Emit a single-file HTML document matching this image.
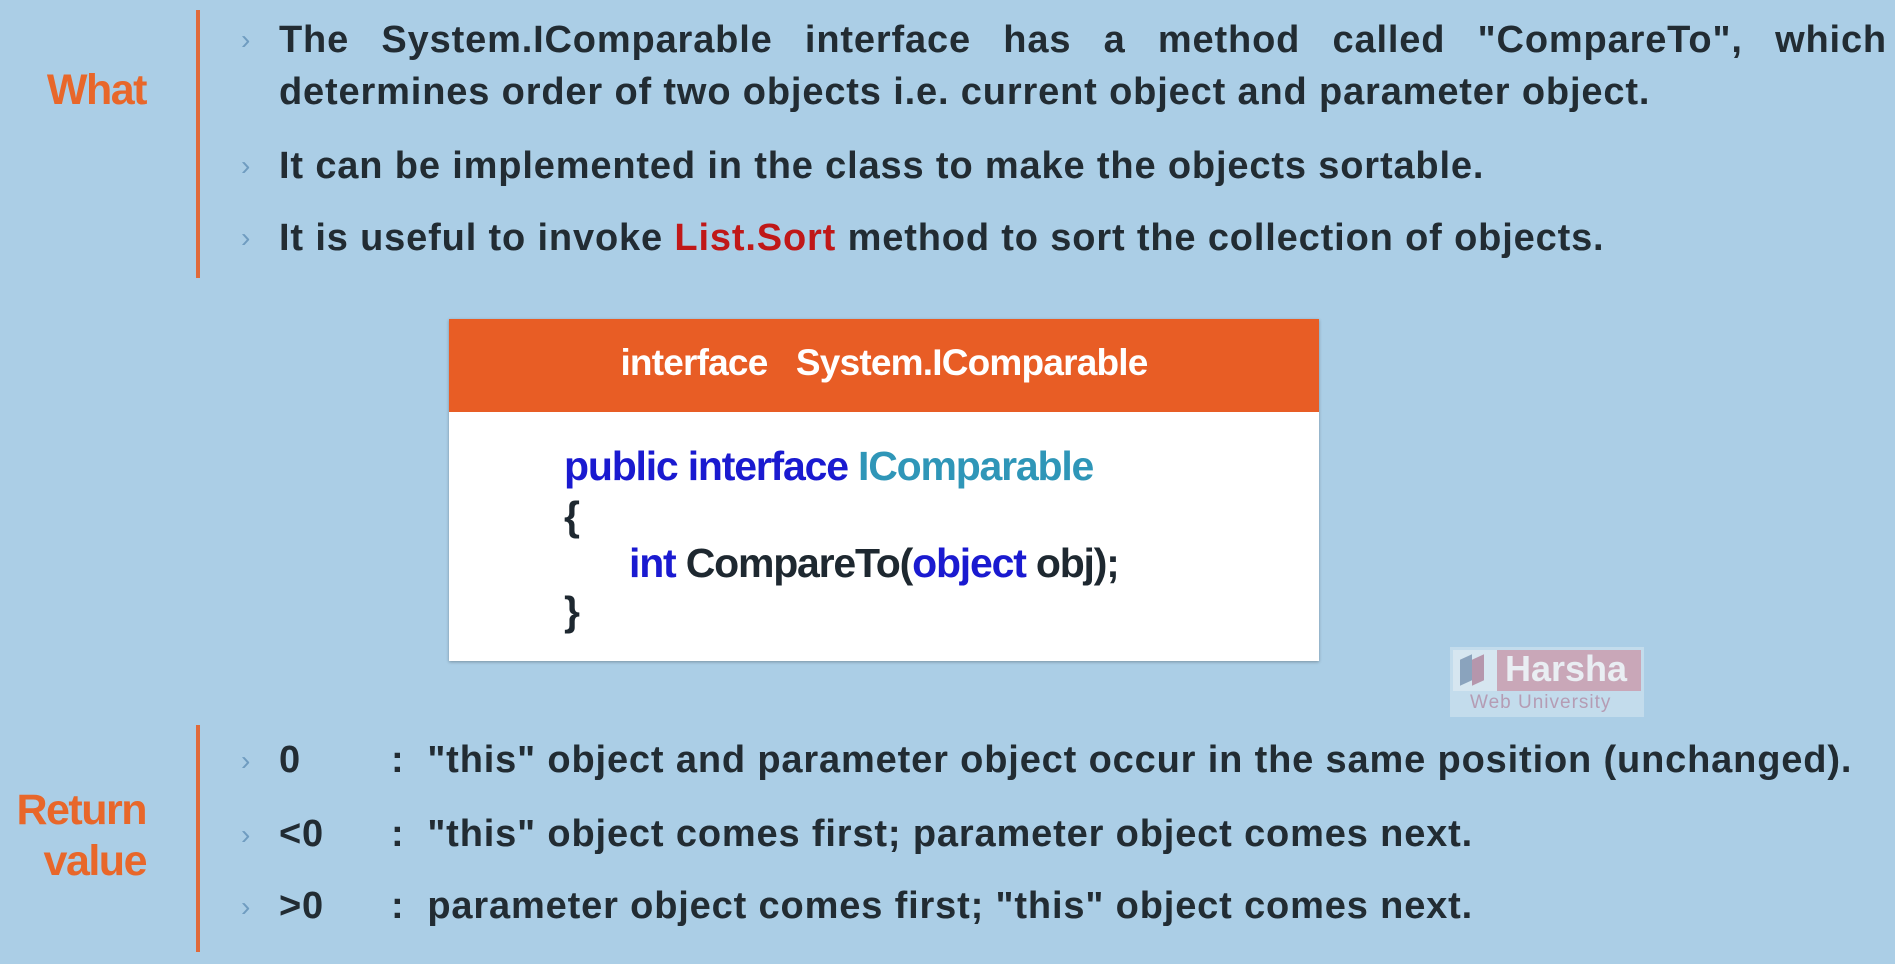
<!DOCTYPE html>
<html><head><meta charset="utf-8"><style>
html,body{margin:0;padding:0}
body{width:1895px;height:964px;background:#abcee6;position:relative;overflow:hidden;font-family:"Liberation Sans",sans-serif;color:#1e2830}
.abs{position:absolute;white-space:nowrap}
.lbl{color:#e8672a;font-weight:bold;font-size:43px;letter-spacing:-1.5px;text-align:right}
.vl{position:absolute;left:196px;width:4px;background:#e06a3a}
.t{font-size:38px;line-height:52px;font-weight:bold;color:#222c33;letter-spacing:0.85px}
.b{position:absolute;color:#6f9cc0;font-size:28px;left:241px}
.code{font-weight:bold;font-size:41px;letter-spacing:-1.2px;line-height:48px}
</style></head><body>
<div class="abs lbl" style="left:30px;top:66px;width:116px">What</div>
<div class="vl" style="top:10px;height:268px"></div>
<div class="b" style="top:24px">›</div>
<div class="b" style="top:150px">›</div>
<div class="b" style="top:222px">›</div>
<div class="abs t" style="left:279px;top:14px;width:1608px;white-space:normal;text-align:justify;text-align-last:left"><span style="display:block;text-align:justify;text-align-last:justify">The System.IComparable interface has a method called "CompareTo", which</span>determines order of two objects i.e. current object and parameter object.</div>
<div class="abs t" style="left:279px;top:140px">It can be implemented in the class to make the objects sortable.</div>
<div class="abs t" style="left:279px;top:212px">It is useful to invoke <span style="color:#c01818">List.Sort</span> method to sort the collection of objects.</div>

<div style="position:absolute;left:449px;top:319px;width:870px;height:342px;background:#fff;box-shadow:0 1px 3px rgba(0,0,0,.3)">
<div style="height:93px;background:#e85d25;color:#fff;font-weight:bold;font-size:37px;letter-spacing:-0.8px;text-align:center;line-height:88px">interface&nbsp;&nbsp; System.IComparable</div>
<div class="abs code" style="left:115px;top:123px"><span style="color:#1a1ad0">public interface </span><span style="color:#2f96b8">IComparable</span></div>
<div class="abs code" style="left:115px;top:173px">{</div>
<div class="abs code" style="left:180px;top:220px"><span style="color:#1a1ad0">int </span>CompareTo(<span style="color:#1a1ad0">object</span> obj);</div>
<div class="abs code" style="left:115px;top:268px">}</div>
</div>

<div style="position:absolute;left:1450px;top:647px;width:194px;height:70px;background:#c3dcec"></div>
<div style="position:absolute;left:1453px;top:650px;width:44px;height:41px;background:#d6e6f0"></div>
<div style="position:absolute;left:1497px;top:650px;width:144px;height:41px;background:#c9a7b8"></div>
<div class="abs" style="left:1505px;top:648px;font-size:36px;font-weight:bold;color:#e9eef3">Harsha</div>
<div class="abs" style="left:1470px;top:692px;font-size:19px;color:#b59cb4;letter-spacing:1px">Web University</div>
<div style="position:absolute;left:1460px;top:657px;width:12px;height:26px;background:#8aa3bd;transform:skewY(-25deg)"></div>
<div style="position:absolute;left:1472px;top:657px;width:12px;height:26px;background:#b596ac;transform:skewY(-25deg)"></div>

<div class="abs lbl" style="left:0px;top:785px;width:146px;line-height:51px">Return<br>value</div>
<div class="vl" style="top:725px;height:227px"></div>
<div class="b" style="top:745px">›</div>
<div class="b" style="top:819px">›</div>
<div class="b" style="top:891px">›</div>
<div class="abs t" style="left:279px;top:734px">0</div>
<div class="abs t" style="left:279px;top:808px">&lt;0</div>
<div class="abs t" style="left:279px;top:880px">&gt;0</div>
<div class="abs t" style="left:391px;top:734px">: &nbsp;"this" object and parameter object occur in the same position (unchanged).</div>
<div class="abs t" style="left:391px;top:808px">: &nbsp;"this" object comes first; parameter object comes next.</div>
<div class="abs t" style="left:391px;top:880px">: &nbsp;parameter object comes first; "this" object comes next.</div>
</body></html>
